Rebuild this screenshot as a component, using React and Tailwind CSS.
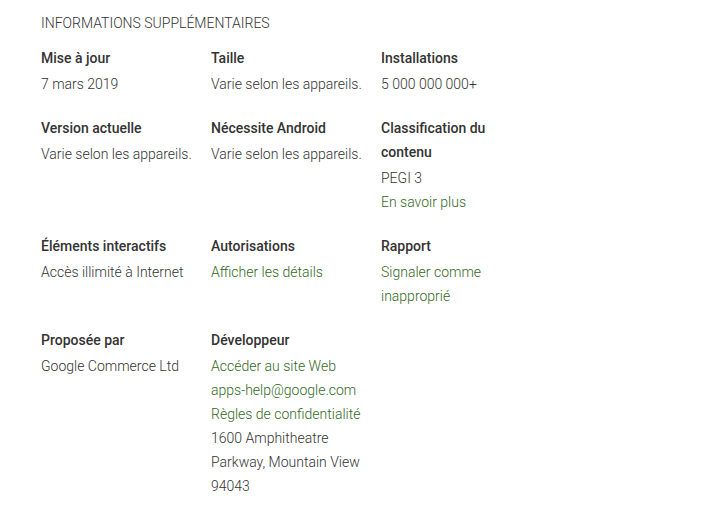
import React from "react";

const rows = [
    [
        { label: "Mise à jour", values: [{ text: "7 mars 2019" }] },
        { label: "Taille", values: [{ text: "Varie selon les appareils." }] },
        { label: "Installations", values: [{ text: "5 000 000 000+" }] },
    ],
    [
        { label: "Version actuelle", values: [{ text: "Varie selon les appareils." }] },
        { label: "Nécessite Android", values: [{ text: "Varie selon les appareils." }] },
        {
            label: "Classification du contenu",
            values: [{ text: "PEGI 3" }, { text: "En savoir plus", link: true }],
        },
    ],
    [
        { label: "Éléments interactifs", values: [{ text: "Accès illimité à Internet" }] },
        { label: "Autorisations", values: [{ text: "Afficher les détails", link: true }] },
        { label: "Rapport", values: [{ text: "Signaler comme inapproprié", link: true }] },
    ],
    [
        { label: "Proposée par", values: [{ text: "Google Commerce Ltd" }] },
        {
            label: "Développeur",
            values: [
                { text: "Accéder au site Web", link: true },
                { text: "apps-help@google.com", link: true },
                { text: "Règles de confidentialité", link: true },
                { text: "1600 Amphitheatre Parkway, Mountain View 94043" },
            ],
        },
    ],
];

const Info = ({ label, values }) => (
    <div className="w-[170px] pr-[14px]">
        <div className="font-medium text-[#333333] leading-6">{label}</div>
        <div className="mt-[2px] font-light">
            {values.map((v, i) => (
                <div
                    key={i}
                    className={`leading-6 ${v.link ? "text-[#33691e]" : "text-[#333333]"}`}
                >
                    {v.text}
                </div>
            ))}
        </div>
    </div>
);

const App = () => {
    return (
        <div
            className="w-[701px] h-[505px] bg-white pl-[41px] pr-[40px] pt-[11px] text-[14px]"
            style={{ fontFamily: "Roboto, sans-serif" }}
        >
            <h2 className="text-[14px] leading-6 text-[#333333] uppercase font-light">
                Informations supplémentaires
            </h2>
            <div className="mt-[11px] flex flex-col gap-[20px]">
                {rows.map((row, i) => (
                    <div key={i} className="flex">
                        {row.map((item) => (
                            <Info key={item.label} {...item} />
                        ))}
                    </div>
                ))}
            </div>
        </div>
    );
};

export default App;
